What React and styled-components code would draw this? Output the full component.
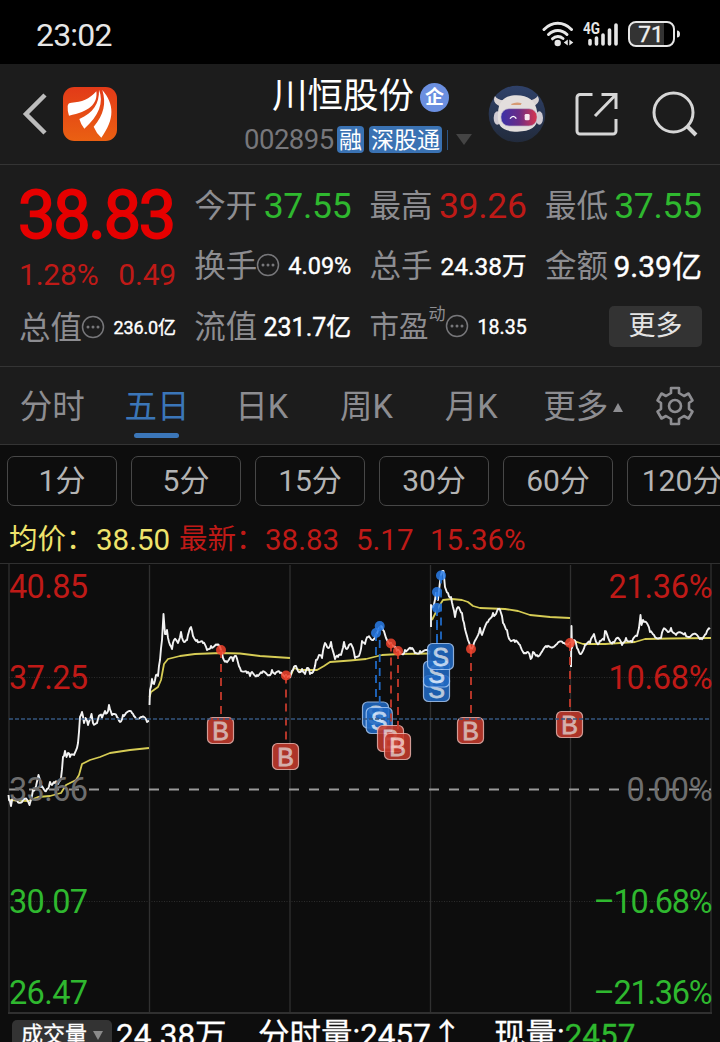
import React, { useState } from 'react';
import styled, { createGlobalStyle } from 'styled-components';

const GlobalStyle = createGlobalStyle`
  * {
    box-sizing: border-box;
  }
  body {
    margin: 0;
    background-color: #0d0d0d;
  }
`;

const colors = {
  up: '#bf1a17',
  down: '#2fb82f',
  label: '#8d8d91',
  white: '#fff',
};

const Screen = styled.div`
  width: 720px;
  height: 1042px;
  overflow: hidden;
  display: flex;
  flex-direction: column;
  background-color: #0d0d0d;
  color: #fff;
  font-family: Roboto, 'Noto Sans CJK SC', sans-serif;
  line-height: 1;
  white-space: nowrap;
`;

/* status bar */

const StatusBar = styled.div`
  flex: none;
  height: 64px;
  display: flex;
  align-items: center;
  justify-content: space-between;
  padding: 6px 40px 0 36px;
  background-color: #000;
  color: #e6e6e6;
`;

const Clock = styled.div`
  font-size: 32px;
  letter-spacing: -0.8px;
`;

const StatusIcons = styled.div`
  display: flex;
  align-items: center;
  margin-top: -2px;
`;

/* header */

const Header = styled.header`
  flex: none;
  height: 101px;
  display: flex;
  align-items: center;
  padding: 0 22px;
  background-color: #1c1c1c;
  border-bottom: 1px solid #343434;
`;

const HeaderLeft = styled.div`
  width: 222px;
  display: flex;
  align-items: center;
  gap: 16px;
`;

const StockTitle = styled.div`
  width: 244px;
  display: flex;
  flex-direction: column;
  padding-top: 7px;
`;

const NameRow = styled.div`
  height: 44px;
  display: flex;
  align-items: center;
  gap: 7px;
  padding-left: 28px;
  font-size: 35.5px;
`;

const CompanyBadge = styled.span`
  width: 29px;
  height: 29px;
  display: flex;
  align-items: center;
  justify-content: center;
  border-radius: 50%;
  background-color: #6b8fe0;
  font-size: 19px;
  font-weight: 700;
  margin: 2px 0 0 -1px;
`;

const CodeRow = styled.div`
  height: 42px;
  display: flex;
  align-items: center;
`;

const Code = styled.span`
  width: 93px;
  color: #77777b;
  font-size: 27.5px;
  letter-spacing: -0.5px;
`;

const Tag = styled.span`
  height: 27px;
  display: flex;
  align-items: center;
  justify-content: center;
  width: ${(props) => props.$width}px;
  margin-right: 5px;
  padding-top: 1px;
  border-radius: 4px;
  background-color: #3a72b3;
  font-size: 23px;
`;

const TagDivider = styled.span`
  width: 1px;
  height: 20px;
  background-color: #2c5380;
`;

const Caret = styled.span`
  width: 0;
  height: 0;
  border-left: ${(props) => props.$size}px solid transparent;
  border-right: ${(props) => props.$size}px solid transparent;
  border-top: ${(props) => (props.$up ? 0 : props.$tall)}px solid ${(props) => props.$color};
  border-bottom: ${(props) => (props.$up ? props.$tall : 0)}px solid ${(props) => props.$color};
  margin-left: ${(props) => props.$gap}px;
`;

const HeaderActions = styled.div`
  display: flex;
  align-items: center;
`;

const Spacer = styled.span`
  width: ${(props) => props.$width}px;
`;

/* quote panel */

const Quote = styled.section`
  flex: none;
  height: 202px;
  display: grid;
  grid-template-columns: repeat(4, 157px);
  column-gap: 18.3px;
  padding: 11px 18px 0 19px;
  background-color: #1c1c1c;
  border-bottom: 1px solid #343434;
`;

const QuoteColumn = styled.div`
  display: flex;
  flex-direction: column;
`;

const Price = styled.div`
  height: 76px;
  display: flex;
  align-items: center;
  color: #e60000;
  font-size: 66.5px;
  -webkit-text-stroke: 1.8px #e60000;
  letter-spacing: -2.2px;
  margin-left: -1px;
  padding-top: 2px;
`;

const Change = styled.div`
  height: 46px;
  display: flex;
  align-items: center;
  justify-content: space-between;
  color: ${colors.up};
  font-size: 30px;
  letter-spacing: -0.2px;
`;

const Cell = styled.div`
  height: 60.5px;
  display: flex;
  align-items: center;
  justify-content: space-between;
`;

const CellLabel = styled.span`
  display: flex;
  align-items: center;
  color: ${colors.label};
  font-size: ${(props) => props.$size || 31.5}px;

  svg {
    flex: none;
    margin: -3px 0 0 -1px;
  }
`;

const CellValue = styled.span`
  color: ${(props) => props.$color || colors.white};
  font-size: ${(props) => props.$size}px;
  letter-spacing: ${(props) => props.$spacing || 0}px;
  -webkit-text-stroke: ${(props) => props.$stroke ?? 0.4}px currentColor;
`;

const Superscript = styled.sup`
  font-size: 17px;
  line-height: 1;
  align-self: flex-start;
  margin-top: -7px;
`;

const MoreButton = styled.button`
  width: 93px;
  height: 41px;
  margin: -2px 0 0 auto;
  padding: 0;
  border: 0;
  border-radius: 5px;
  background-color: #333;
  color: #e4e4e4;
  font: inherit;
  font-size: 27px;
`;

/* period tabs */

const Tabs = styled.nav`
  flex: none;
  height: 78px;
  display: flex;
  background-color: #1c1c1c;
  border-bottom: 1px solid #343434;
`;

const Tab = styled.div`
  width: 104.7px;
  height: 77px;
  display: flex;
  align-items: center;
  justify-content: center;
  padding: 3px 0 0 ${(props) => props.$indent || 0}px;
  color: ${(props) => (props.$active ? '#3b76b8' : colors.label)};
  font-size: 32.5px;
  cursor: pointer;
  position: relative;

  &::after {
    content: '';
    display: ${(props) => (props.$active ? 'block' : 'none')};
    position: absolute;
    left: 29px;
    bottom: 6px;
    width: 45px;
    height: 5px;
    border-radius: 3px;
    background-color: #3b76b8;
  }
`;

const SettingsButton = styled.div`
  flex: 1;
  display: flex;
  align-items: center;
  padding-left: 27px;
`;

const Intervals = styled.div`
  flex: none;
  height: 62px;
  display: flex;
  gap: 14px;
  padding: 11px 0 0 7px;
`;

const Interval = styled.div`
  flex: none;
  width: 110px;
  height: 50px;
  display: flex;
  align-items: center;
  justify-content: center;
  border: 1px solid #474747;
  border-radius: 7px;
  color: #b4b4b4;
  font-size: 30px;
`;

const Summary = styled.div`
  flex: none;
  height: 56px;
  display: flex;
  align-items: center;
  padding: 11px 0 0 9px;
  color: ${colors.up};
  font-size: 29.5px;
`;

const SummaryItem = styled.span`
  width: ${(props) => props.$width}px;
  color: ${(props) => props.$color || 'inherit'};
  font-size: ${(props) => props.$size || 29.5}px;
`;

/* chart */

const Chart = styled.svg`
  flex: none;
  display: block;
  font-family: Roboto, 'Noto Sans CJK SC', sans-serif;
`;

const Footer = styled.div`
  flex: none;
  height: 42px;
  display: flex;
  align-items: center;
  padding: 1px 0 0 12px;
  font-size: 31.5px;
  -webkit-text-stroke: 0.3px currentColor;
`;

const VolumeSelect = styled.div`
  width: 100px;
  height: 32px;
  display: flex;
  align-items: center;
  padding: 0 0 1px 9px;
  margin-right: 4px;
  border-radius: 5px;
  background-color: #333;
  font-size: 22px;
`;

const FooterItem = styled.span`
  width: ${(props) => props.$width}px;
`;

const Down = styled.span`
  color: ${colors.down};
`;

const WifiIcon = () => (
  <svg width="32" height="26" viewBox="0 0 32 26" fill="none" stroke="#e6e6e6" strokeWidth="3" strokeLinecap="round">
    <path d="M2 8.5C10 .3 21.500 .3 29.500 8.500" />
    <path d="M6.500 13.500C11.800 8 19.700 8 25 13.500" />
    <path d="M10.500 17.800C13.500 14.800 18 14.800 21 17.500" />
    <circle cx="15.700" cy="22" r="3.200" fill="#e6e6e6" stroke="none" />
    <path d="M25.800 18.500v6l-4-3zM27.300 18.500v6l4-3z" fill="#e6e6e6" stroke="none" />
  </svg>
);

const SignalIcon = () => (
  <svg width="37" height="26" viewBox="0 0 37 26" stroke="#e6e6e6" strokeWidth="3.600" strokeLinecap="round">
    <text x="0" y="13" fontSize="16" fontWeight="700" fill="#e6e6e6" stroke="none" textLength="17" lengthAdjust="spacingAndGlyphs">4G</text>
    <path d="M7 19.500v3.500M13.500 17v6M20 14v9M26.500 9v14M33 4v19" />
  </svg>
);

const BatteryIcon = () => (
  <svg width="52" height="26" viewBox="0 0 52 26">
    <path d="M2 8a6 6 0 0 1 6-6h28v22H8a6 6 0 0 1-6-6z" fill="#333" />
    <rect x="1" y="1" width="45" height="24" rx="7" fill="none" stroke="#e6e6e6" strokeWidth="2" />
    <path d="M49 9.500q3 0 3 3.500t-3 3.500z" fill="#e6e6e6" />
    <text x="23" y="21" fontSize="22.500" fill="#f0f0f0" stroke="#f0f0f0" strokeWidth=".4" textAnchor="middle">71</text>
  </svg>
);

const BackIcon = () => (
  <svg width="25" height="42" viewBox="0 0 25 42" fill="none" stroke="#bcbcbc" strokeWidth="4.500">
    <path d="M23 2L4 21l19 19" />
  </svg>
);

const BrandLogo = () => (
  <svg width="54" height="54" viewBox="189 261 162 162">
    <defs>
      <linearGradient id="brand" x1="0" y1="0" x2="0" y2="1">
        <stop offset="0" stopColor="#e23a18" />
        <stop offset="1" stopColor="#ea6012" />
      </linearGradient>
    </defs>
    <rect x="189" y="261" width="162" height="162" rx="34" fill="url(#brand)" />
    <g fill="#fff">
      <path d="M203 318q1-10 12-10c30-1 53-10 74-34 5 38-22 62-82 73q-5-12-4-29z" />
      <path d="M297 269c15 38 0 78-44 117q-10-11-15-29c42-20 60-45 59-88z" />
      <path d="M307 270c36 42 38 87-3 143q-15-13-23-33c31-36 38-70 26-110z" />
    </g>
  </svg>
);

const RobotAvatar = () => (
  <svg width="58" height="58" viewBox="379 256 174 174">
    <defs>
      <linearGradient id="visor" x1="0" y1="0" x2="1" y2="0">
        <stop offset="0" stopColor="#3b32a8" />
        <stop offset="0.5" stopColor="#6b2c86" />
        <stop offset="1" stopColor="#d9364e" />
      </linearGradient>
      <linearGradient id="sky" x1="0" y1="0" x2="0" y2="1">
        <stop offset="0" stopColor="#2f4169" />
        <stop offset="1" stopColor="#222b3c" />
      </linearGradient>
    </defs>
    <circle cx="466" cy="343" r="85" fill="url(#sky)" />
    <path d="M414 320q-24-12-14-31 7 12 27 13zM514 320q26-12 14-31-8 12-26 13z" fill="#d9d3d4" />
    <ellipse cx="407" cy="355" rx="11" ry="20" fill="#cfcad2" />
    <ellipse cx="533" cy="355" rx="11" ry="20" fill="#cfcad2" />
    <path d="M409 340c2-38 22-53 56-53s57 14 62 52c6 40-15 57-60 57s-62-16-58-56z" fill="#e3dedd" />
    <path d="M448 313q16-8 32-2l-3 5h-27z" fill="#d79b75" />
    <rect x="418" y="327" width="108" height="52" rx="24" fill="url(#visor)" stroke="#bdb2c9" strokeWidth="2" />
    <path d="M445 357q10-14 19 0" fill="none" stroke="#fff" strokeWidth="4" />
    <rect x="489" y="343" width="15" height="19" rx="4" fill="#f8e6ef" />
  </svg>
);

const ShareIcon = () => (
  <svg width="44" height="44" viewBox="0 0 44 44" fill="none" stroke="#d6d6d6" strokeWidth="3">
    <path d="M17.500 2.500H5a3 3 0 0 0-3 3V39a3 3 0 0 0 3 3h33a3 3 0 0 0 3-3V27" />
    <path d="M26.500 2.500H41V17M41 2.500L20 24" />
  </svg>
);

const SearchIcon = () => (
  <svg width="46" height="46" viewBox="0 0 46 46" fill="none" stroke="#d6d6d6" strokeWidth="3">
    <circle cx="21.500" cy="21.500" r="19.500" />
    <path d="M35 35l9 9" strokeWidth="4" />
  </svg>
);

const InfoIcon = () => (
  <svg width="24" height="24" viewBox="0 0 24 24">
    <circle cx="12" cy="12" r="10.500" fill="none" stroke="#77777a" strokeWidth="1.500" />
    <circle cx="7" cy="12" r="1.500" fill="#77777a" />
    <circle cx="12" cy="12" r="1.500" fill="#77777a" />
    <circle cx="17" cy="12" r="1.500" fill="#77777a" />
  </svg>
);

const GearIcon = () => (
  <svg width="40" height="40" viewBox="0 0 40 40" fill="none" stroke={colors.label} strokeWidth="2.600" strokeLinejoin="round">
    <path d="M16 2h8v5l5 3 4.500-2.500 4 7-3.500 2.500v6l3.500 2.500-4 7L29 30l-5 3v5h-8v-5l-5-3-4.500 2.500-4-7L6 23v-6l-3.500-2.500 4-7L11 10l5-3z" />
    <circle cx="20" cy="20" r="6" />
  </svg>
);

// intraday prices, one polyline per session
const priceSessions = [
  [[8.5, 795], [9, 800], [11, 806], [13, 798], [17, 800], [22, 802], [25, 799], [29.5, 805], [33, 790], [36, 786], [38.5, 775], [41, 787], [45, 791], [47, 789], [50, 782], [52, 785], [55, 783], [58, 784], [61, 778], [63, 757], [65, 751], [66.5, 757], [68, 753], [70, 757], [74, 755], [78, 743], [80, 717], [82, 712], [84, 723], [85.5, 718], [88, 725], [91.5, 714], [93, 723], [97, 723], [100, 715], [102, 718], [105, 711], [107, 713], [109, 705], [112, 715], [117, 717], [120, 722], [123, 715], [126, 713], [132, 713], [135, 717], [142, 717], [147, 722], [149, 721]],
  [[149.5, 705], [150, 690], [152, 679], [154, 684], [156, 675], [158, 676], [160, 660], [162, 640], [163.5, 614], [165, 634], [167, 630], [169, 642], [172, 649], [174, 640], [178, 643], [181, 632], [184, 642], [187, 640], [191, 627], [193, 636], [197, 640], [203, 643], [207, 650], [211, 646], [217, 645], [221, 650], [223, 658], [226, 661], [231, 657], [233, 661], [236, 656], [240, 668], [247, 673], [250, 676], [252, 672], [257, 675], [262, 673], [269, 675], [272, 670], [275, 674], [280, 673], [286, 675], [290, 676]],
  [[290, 678], [293, 670], [296, 666], [298, 671], [302, 669], [305, 674], [308, 668], [310, 674], [313, 672], [316, 660], [319, 655], [322, 658], [325, 643], [328, 648], [331, 642], [335, 659], [338, 657], [341, 655], [344, 642], [347, 649], [349, 645], [352, 646], [355, 658], [360, 653], [362, 641], [365, 644], [368, 637], [372, 640], [376, 634], [380, 627], [383, 630], [386, 638], [391, 643], [397, 651], [402, 654], [405, 650], [411, 649], [415, 653], [420, 651], [430, 652.5]],
  [[431, 627], [431, 605], [433, 607], [436, 593], [438, 600], [441, 575], [443.5, 571], [445, 587], [448, 593], [451, 597], [453, 607], [455, 617], [458, 607], [462, 613], [464, 623], [468, 640], [470.7, 649], [474, 643], [480, 628], [482, 635], [488, 622], [493, 613], [495, 615], [498, 609], [501, 613], [503, 623], [507, 630], [510, 640], [515, 642], [520, 645], [525, 653], [528, 652], [530.7, 659], [533, 652], [537, 655], [541, 653], [547, 647], [557, 644], [563, 643], [570, 642]],
  [[571, 667], [571.5, 626], [572, 648], [574, 640], [577, 648], [580, 654], [585, 645], [590, 643], [594, 634], [597, 643], [600, 641], [604, 640], [605, 631], [609, 640], [613, 642], [617, 638], [622, 645], [626, 638], [632, 642], [637, 636], [639, 628], [640.5, 615], [641.5, 625], [643, 620], [646, 622], [650, 632], [654, 635], [661, 638], [663, 630], [668, 632], [671, 628], [676, 635], [685, 633], [690, 637], [697, 635], [701, 638], [706, 634], [710, 629]],
];

const averageSessions = [
  [[9, 800], [28, 801], [38, 797], [50, 796], [61, 793], [66, 785], [76, 780], [79, 775], [82, 764], [90, 760], [100, 757], [110, 753], [130, 750], [149, 748]],
  [[149.5, 697], [151, 692], [158, 687], [161, 680], [164, 664], [168, 659], [180, 656], [195, 654], [221, 653], [240, 653.5], [260, 656], [290, 658]],
  [[291, 675], [294, 668], [300, 670], [317, 670], [324, 666], [330, 662], [350, 660.5], [366, 659], [382, 655], [400, 654], [430, 653.5]],
  [[432, 620], [438, 608], [443, 600], [452, 599], [462, 600], [468, 602], [473, 606], [480, 608], [505, 609], [518, 611], [530, 615], [550, 617], [570, 618]],
  [[571, 641], [577, 642], [583, 644], [605, 644], [635, 642], [645, 639], [670, 638.5], [711, 638]],
];

const trades = [
  { side: 'B', x: 221, y: 650, tag: 730.5 },
  { side: 'B', x: 286, y: 675.5, tag: 756.5 },
  { side: 'S', x: 376, y: 633, tag: 715 },
  { side: 'S', x: 379.7, y: 626, tag: 720.5 },
  { side: 'B', x: 391, y: 643.5, tag: 738.5 },
  { side: 'B', x: 398, y: 651, tag: 746.5 },
  { side: 'S', x: 437, y: 608, tag: 688.5 },
  { side: 'S', x: 437, y: 592, tag: 674 },
  { side: 'S', x: 441, y: 575.5, tag: 656.5 },
  { side: 'B', x: 471, y: 649, tag: 730.5 },
  { side: 'B', x: 570, y: 643, tag: 724.5 },
];

const axisLabels = [
  { y: 598, left: '40.85', right: '21.36%', width: 104, color: colors.up },
  { y: 689, left: '37.25', right: '10.68%', width: 104, color: colors.up },
  { y: 801, left: '33.66', right: '0.00%', width: 86, color: '#6e6e6e' },
  { y: 913, left: '30.07', right: '–10.68%', width: 119, color: colors.down },
  { y: 1004, left: '26.47', right: '–21.36%', width: 119, color: colors.down },
];

const withTicks = (points) => {
  const out = [];
  points.forEach(([x, y], i) => {
    out.push(`${x},${y}`);
    const next = points[i + 1];
    if (!next) return;
    const steps = Math.floor((next[0] - x) / 1);
    for (let s = 1; s < steps; s += 1) {
      const t = s / steps;
      const wobble = Math.sin((x + s) * 12.9898) * 2.1;
      out.push(`${x + (next[0] - x) * t},${y + (next[1] - y) * t + wobble}`);
    }
  });
  return out.join(' ');
};

const Trade = ({ side, x, y, tag }) => {
  const fill = side === 'B' ? '#c53a2c' : '#2069c4';
  const dot = side === 'B' ? '#f0442e' : '#2a7de8';
  return (
    <g>
      <path d={`M${x} ${y}V${tag - 13}`} stroke={fill} strokeWidth="1.8" strokeDasharray="8 6" />
      <circle cx={x} cy={y} r="5" fill={dot} opacity="0.85" />
      <g opacity="0.87">
        <rect x={x - 13.5} y={tag - 13} width="26" height="26" rx="5" fill={fill} stroke={side === 'B' ? '#efb1aa' : '#a2c6f5'} strokeWidth="1.2" />
        <text x={x - 0.5} y={tag + 9} fontFamily="'Liberation Sans', sans-serif" fontSize="25" fill={side === 'B' ? '#f2c7c2' : '#d3e4fa'} stroke={side === 'B' ? '#f2c7c2' : '#d3e4fa'} strokeWidth="0.8" textAnchor="middle">{side}</text>
      </g>
    </g>
  );
};

const PriceChart = () => (
  <Chart width="720" height="451" viewBox="0 563 720 451">
    <g stroke="#303030" fill="none">
      <path d="M0 563.500H720" />
      <path d="M9 564V1013M149.500 565V1013M290 565V1013M430.500 565V1013M570.500 565V1013M711 564V1013" strokeWidth="1.300" />
      <path d="M8 1013H712" strokeWidth="2" />
      <path d="M9 677.500H711M9 901.500H711" strokeDasharray="1 1.500" stroke="#2c2c2c" />
    </g>
    <path d="M9 789.500H711" stroke="#9a9a9a" strokeWidth="1.800" strokeDasharray="10 10" />
    {averageSessions.map((points, i) => (
      <polyline key={i} points={points.map((p) => p.join(',')).join(' ')} fill="none" stroke="#d6cc55" strokeWidth="1.800" strokeLinejoin="round" />
    ))}
    {priceSessions.map((points, i) => (
      <polyline key={i} points={withTicks(points)} fill="none" stroke="#f2f2f2" strokeWidth="1.900" strokeLinejoin="round" />
    ))}
    {axisLabels.map((label) => (
      <g key={label.left} fill={label.color} fontSize="32.500">
        <text x="9" y={label.y} textLength="79">{label.left}</text>
        <text x={712.5 - label.width} y={label.y} textLength={label.width}>{label.right}</text>
      </g>
    ))}
    {trades.map((trade) => (
      <Trade key={`${trade.x}-${trade.tag}`} {...trade} />
    ))}
    <path d="M9 719H711" stroke="#34567f" strokeWidth="1.500" strokeDasharray="4 2" />
  </Chart>
);

const tabs = ['分时', '五日', '日K', '周K', '月K', '更多'];
const intervals = ['1分', '5分', '15分', '30分', '60分', '120分'];

const App = () => {
  const [activeTab, setActiveTab] = useState('五日');

  return (
    <Screen>
      <GlobalStyle />
      <StatusBar>
        <Clock>23:02</Clock>
        <StatusIcons>
          <WifiIcon />
          <Spacer $width={9} />
          <SignalIcon />
          <Spacer $width={8} />
          <BatteryIcon />
        </StatusIcons>
      </StatusBar>

      <Header>
        <HeaderLeft>
          <BackIcon />
          <BrandLogo />
        </HeaderLeft>
        <StockTitle>
          <NameRow>
            川恒股份
            <CompanyBadge>企</CompanyBadge>
          </NameRow>
          <CodeRow>
            <Code>002895</Code>
            <Tag $width={27}>融</Tag>
            <Tag $width={73}>深股通</Tag>
            <TagDivider />
            <Caret $size={8} $tall={11} $gap={8} $color="#444" />
          </CodeRow>
        </StockTitle>
        <HeaderActions>
          <RobotAvatar />
          <Spacer $width={29} />
          <ShareIcon />
          <Spacer $width={33} />
          <SearchIcon />
        </HeaderActions>
      </Header>

      <Quote>
        <QuoteColumn>
          <Price>38.83</Price>
          <Change>
            <span>1.28%</span>
            <span>0.49</span>
          </Change>
          <Cell>
            <CellLabel>总值<InfoIcon /></CellLabel>
            <CellValue $size={18} $spacing={-0.1}>236.0亿</CellValue>
          </Cell>
        </QuoteColumn>
        <QuoteColumn>
          <Cell>
            <CellLabel>今开</CellLabel>
            <CellValue $size={35.5} $spacing={-0.3} $stroke={0} $color={colors.down}>37.55</CellValue>
          </Cell>
          <Cell>
            <CellLabel>换手<InfoIcon /></CellLabel>
            <CellValue $size={23.5}>4.09%</CellValue>
          </Cell>
          <Cell>
            <CellLabel>流值</CellLabel>
            <CellValue $size={25}>231.7亿</CellValue>
          </Cell>
        </QuoteColumn>
        <QuoteColumn>
          <Cell>
            <CellLabel>最高</CellLabel>
            <CellValue $size={35.5} $spacing={-0.3} $stroke={0} $color={colors.up}>39.26</CellValue>
          </Cell>
          <Cell>
            <CellLabel>总手</CellLabel>
            <CellValue $size={24.5}>24.38万</CellValue>
          </Cell>
          <Cell>
            <CellLabel $size={29.5}>
              市盈
              <Superscript>动</Superscript>
              <InfoIcon />
            </CellLabel>
            <CellValue $size={19.5}>18.35</CellValue>
          </Cell>
        </QuoteColumn>
        <QuoteColumn>
          <Cell>
            <CellLabel>最低</CellLabel>
            <CellValue $size={35.5} $spacing={-0.3} $stroke={0} $color={colors.down}>37.55</CellValue>
          </Cell>
          <Cell>
            <CellLabel>金额</CellLabel>
            <CellValue $size={30}>9.39亿</CellValue>
          </Cell>
          <Cell>
            <MoreButton>更多</MoreButton>
          </Cell>
        </QuoteColumn>
      </Quote>

      <Tabs>
        {tabs.map((tab) => (
          <Tab key={tab} $active={tab === activeTab} $indent={tab === '更多' ? 15 : 0} onClick={() => setActiveTab(tab)}>
            {tab}
            {tab === '更多' && <Caret $up $size={5.5} $tall={9} $gap={5} $color={colors.label} />}
          </Tab>
        ))}
        <SettingsButton>
          <GearIcon />
        </SettingsButton>
      </Tabs>

      <Intervals>
        {intervals.map((interval) => (
          <Interval key={interval}>{interval}</Interval>
        ))}
      </Intervals>

      <Summary>
        <SummaryItem $width={87} $size={28.5} $color="#efe36c">均价：</SummaryItem>
        <SummaryItem $width={83} $color="#efe36c">38.50</SummaryItem>
        <SummaryItem $width={86} $size={28.5}>最新：</SummaryItem>
        <SummaryItem $width={91}>38.83</SummaryItem>
        <SummaryItem $width={74}>5.17</SummaryItem>
        <SummaryItem $width={100}>15.36%</SummaryItem>
      </Summary>

      <PriceChart />

      <Footer>
        <VolumeSelect>
          成交量
          <Caret $size={5.5} $tall={9} $gap={6} $color="#8a8a8a" />
        </VolumeSelect>
        <FooterItem $width={142}>24.38万</FooterItem>
        <FooterItem $width={236}>分时量:2457↑</FooterItem>
        <FooterItem $width={150}>
          现量:<Down>2457</Down>
        </FooterItem>
      </Footer>
    </Screen>
  );
};

export default App;
